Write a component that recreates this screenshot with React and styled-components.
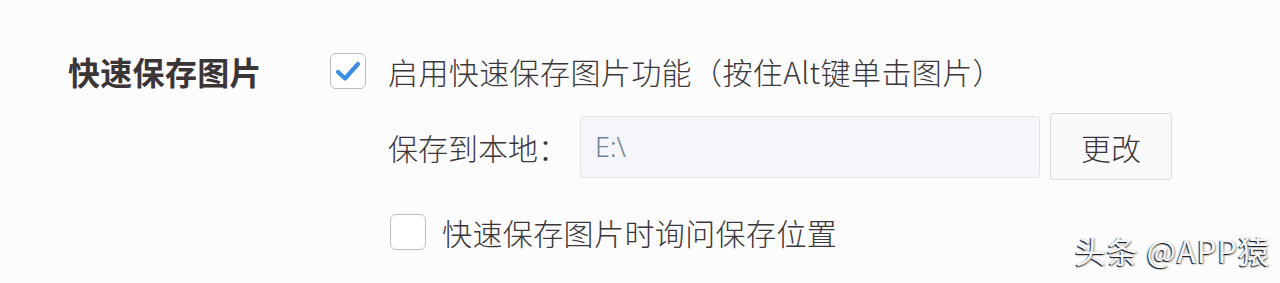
import React from "react";
import styled, { createGlobalStyle } from "styled-components";

const Global = createGlobalStyle`
  html, body { margin: 0; padding: 0; background: #fdfcfd; }
  body { font-family: "Noto Sans CJK SC", "Noto Sans", sans-serif; }
`;

const Page = styled.div`
  position: relative;
  width: 1280px;
  height: 283px;
  box-sizing: border-box;
  padding: 53px 0 0 68px;
  display: flex;
  align-items: flex-start;
  overflow: hidden;
`;

const Title = styled.div`
  width: 262px;
  height: 36px;
  display: flex;
  align-items: center;
  font-size: 32px;
  font-weight: 700;
  color: #3b3538;
  letter-spacing: 0.3px;
`;

const Body = styled.div`
  display: flex;
  flex-direction: column;
`;

const CheckRow = styled.label`
  display: flex;
  align-items: center;
  gap: ${(p) => p.$gap}px;
  margin-left: ${(p) => p.$indent || 0}px;
  margin-top: ${(p) => p.$top || 0}px;
  height: 36px;
`;

const Box = styled.span`
  width: 34px;
  height: 34px;
  border: 1px solid #bdb9bc;
  border-radius: 6px;
  background: #fff;
  display: flex;
  align-items: center;
  justify-content: center;
  flex: none;
`;

const Text = styled.span`
  font-size: 30px;
  font-weight: 300;
  color: #3a3639;
  line-height: 1;
  white-space: nowrap;
  letter-spacing: ${(p) => p.$ls || 0}px;
`;

const PathRow = styled.div`
  display: flex;
  align-items: center;
  margin-left: 58px;
  margin-top: 24px;
  height: 67px;
`;

const PathLabel = styled(Text)`
  width: 192px;
`;

const Input = styled.div`
  width: 460px;
  height: 62px;
  box-sizing: border-box;
  border: 1px solid #e2e4e8;
  border-radius: 3px;
  background: #f5f6f9;
  display: flex;
  align-items: center;
  padding-left: 14px;
  font-size: 27px;
  font-weight: 300;
  color: #6e8191;
  font-family: "Noto Sans", "Noto Sans CJK SC", sans-serif;
`;

const Button = styled.div`
  margin-left: 10px;
  width: 122px;
  height: 67px;
  box-sizing: border-box;
  border: 1px solid #dcdcdf;
  border-radius: 3px;
  background: #fafafb;
  display: flex;
  align-items: center;
  justify-content: center;
  font-size: 30px;
  font-weight: 300;
  color: #3a3639;
`;

const Watermark = styled.div`
  position: absolute;
  right: 10px;
  bottom: 11px;
  font-size: 31px;
  color: #f7f7f7;
  font-family: "Noto Sans CJK SC", sans-serif;
  letter-spacing: 1px;
  text-shadow: -1px 1px 1px rgba(0, 0, 0, 0.9), 1px 1px 2px rgba(0, 0, 0, 0.45);
`;

const Check = () => (
  <svg width="26" height="22" viewBox="0 0 26 22">
    <path
      d="M3 12 L10 18.5 L23 4"
      fill="none"
      stroke="#3a8fe3"
      strokeWidth="4.2"
      strokeLinecap="round"
      strokeLinejoin="round"
    />
  </svg>
);

export default function App() {
  return (
    <>
      <Global />
      <Page>
        <Title>快速保存图片</Title>
        <Body>
          <CheckRow $gap={22}>
            <Box>
              <Check />
            </Box>
            <Text $ls={0.4}>启用快速保存图片功能（按住Alt键单击图片）</Text>
          </CheckRow>
          <PathRow>
            <PathLabel>保存到本地：</PathLabel>
            <Input>E:\</Input>
            <Button>更改</Button>
          </PathRow>
          <CheckRow $gap={16} $indent={60} $top={34}>
            <Box />
            <Text $ls={0.4}>快速保存图片时询问保存位置</Text>
          </CheckRow>
        </Body>
        <Watermark>头条 @APP猿</Watermark>
      </Page>
    </>
  );
}
